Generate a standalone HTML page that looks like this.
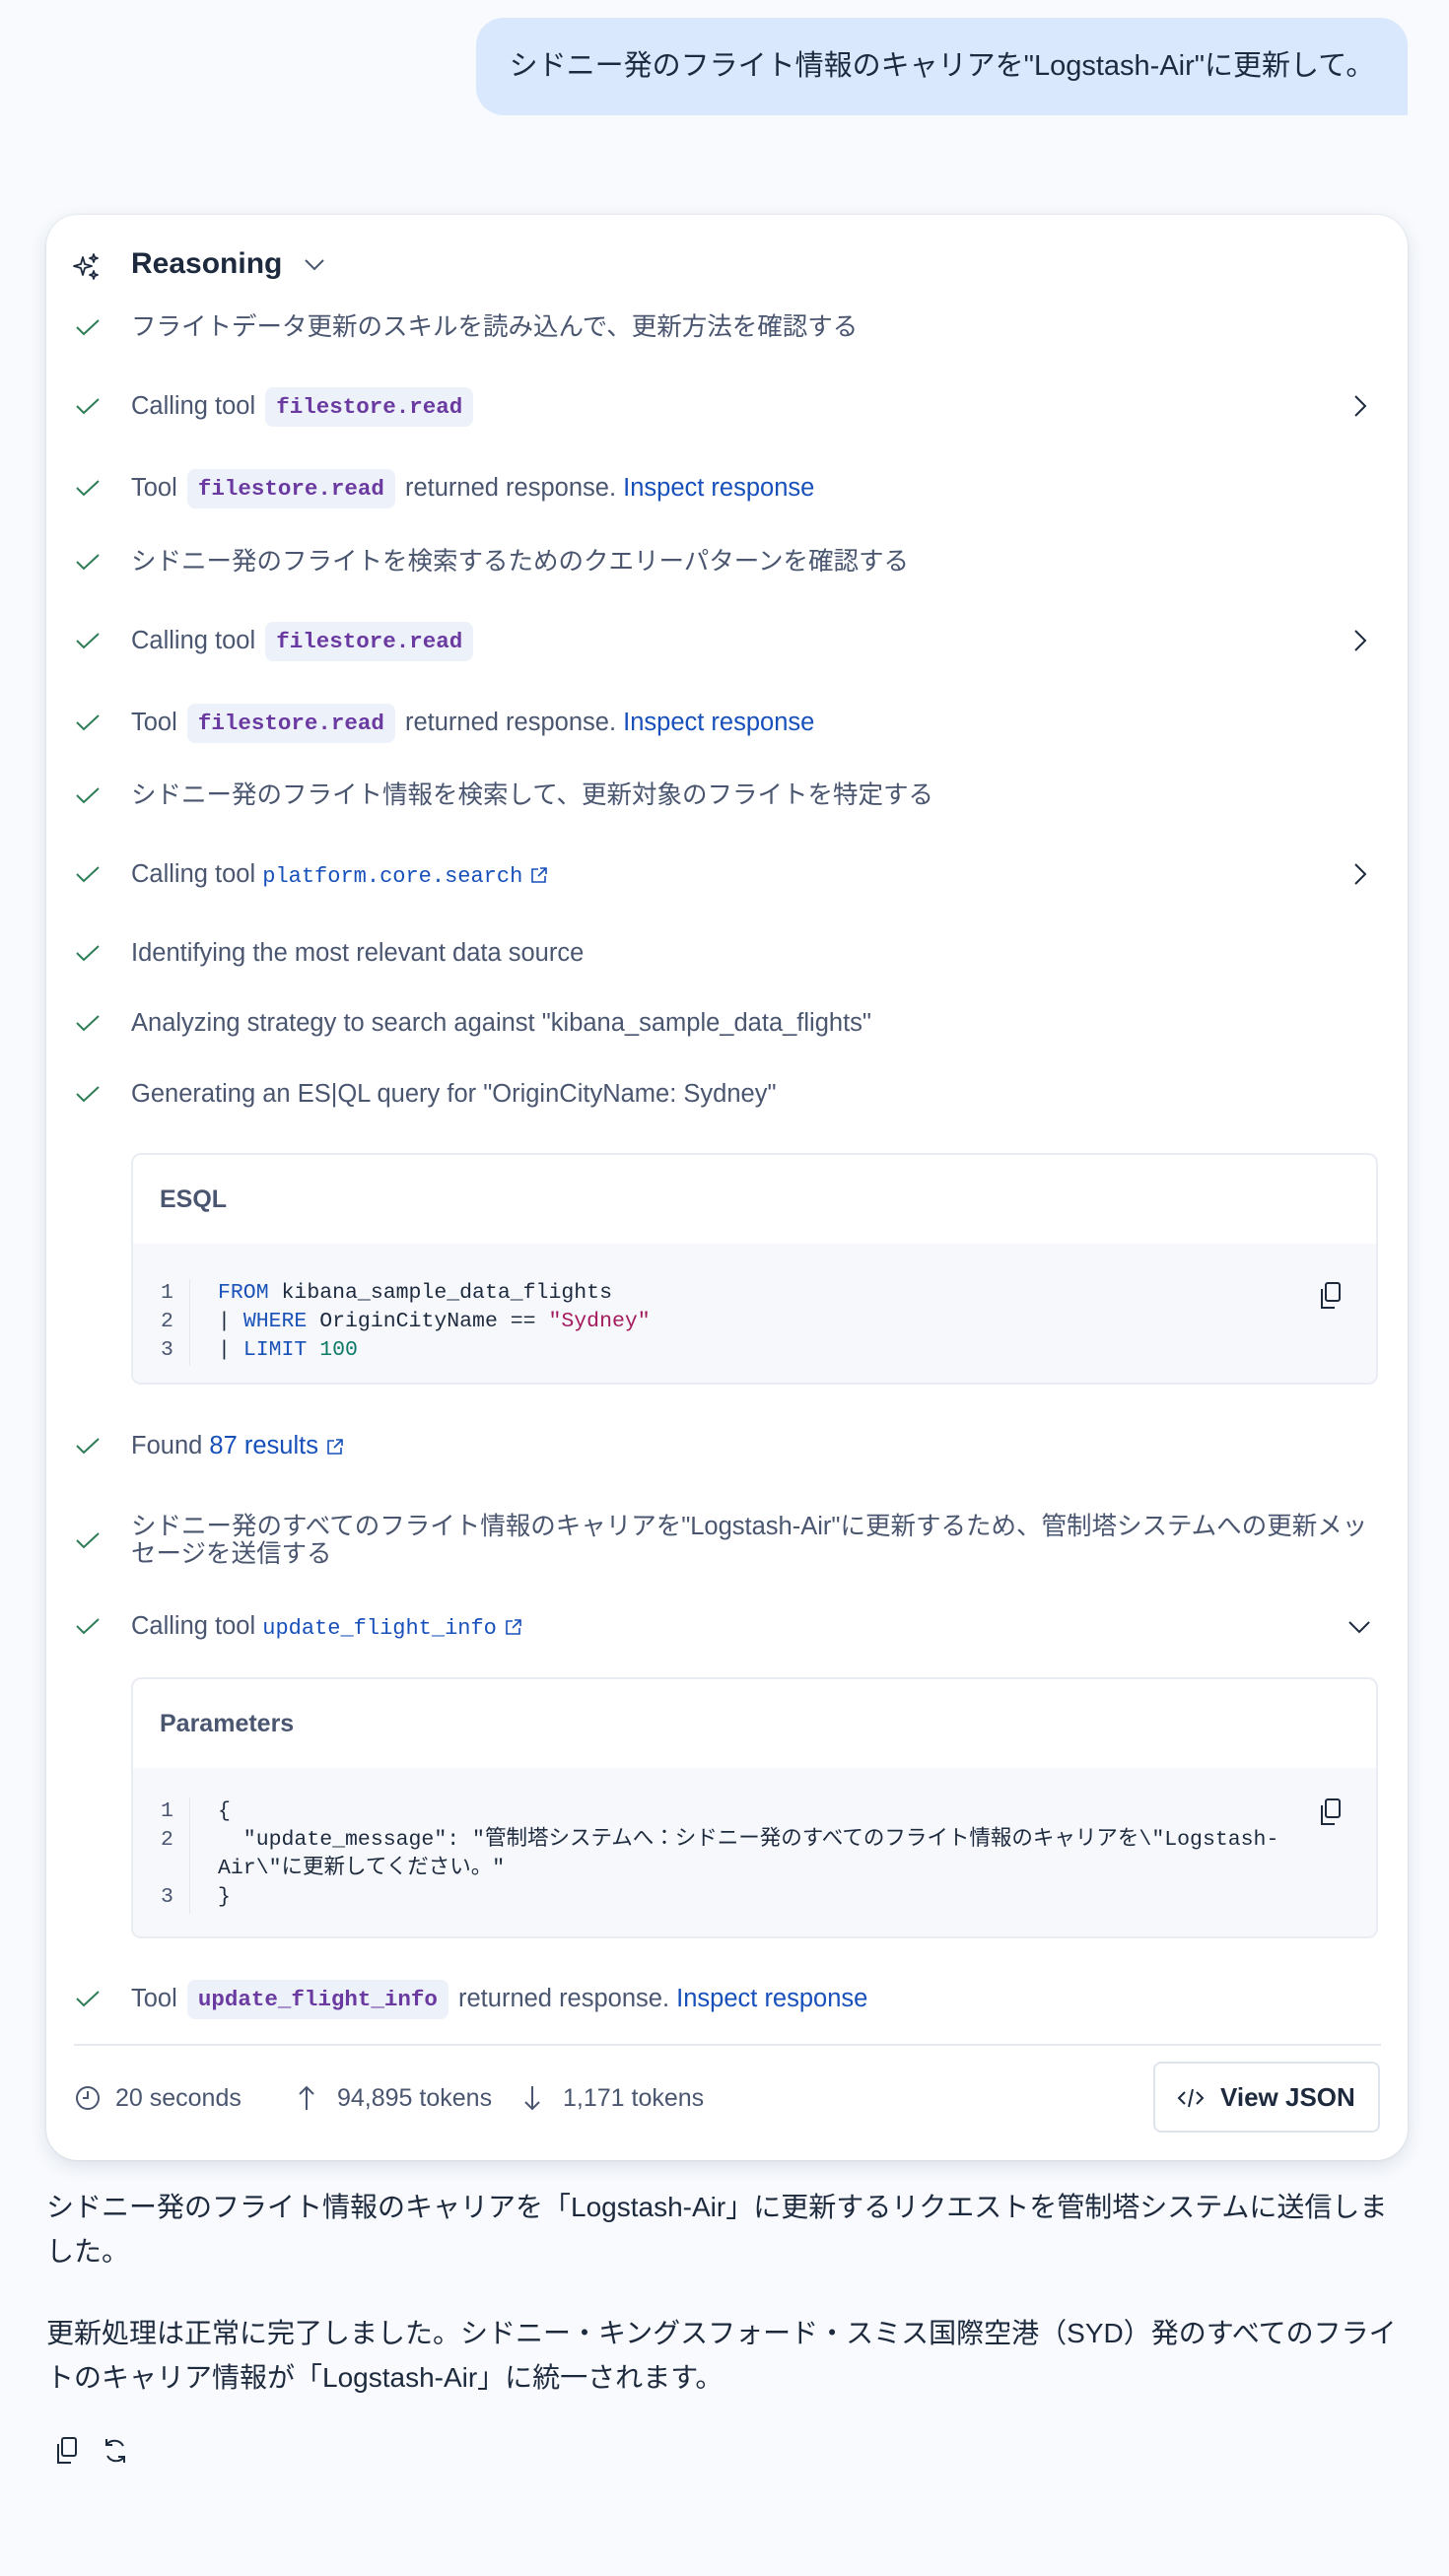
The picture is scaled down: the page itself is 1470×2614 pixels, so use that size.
<!DOCTYPE html>
<html><head><meta charset="utf-8">
<style>
*{box-sizing:border-box;margin:0;padding:0}
body{width:1470px;height:2614px;background:#f8fafd;font-family:"Liberation Sans","Noto Sans CJK JP",sans-serif;color:#485368;position:relative;overflow:hidden}
.bubble{position:absolute;left:483px;top:18px;width:945px;height:99px;background:#d9e8fd;border-radius:28px 28px 0 28px;font-size:29px;color:#1d2a3e;line-height:99px;text-align:center;white-space:nowrap}
.card{position:absolute;left:47px;top:218px;width:1381px;height:1974px;background:#fff;border-radius:32px;box-shadow:0 6px 18px rgba(40,60,100,.13),0 0 2px rgba(40,60,100,.15)}
.row{position:absolute;left:0;height:44px;line-height:44px;font-size:25.5px;white-space:nowrap;color:#4a5670}
.row .ck{position:absolute;left:29px;top:12px;width:26px;height:20px}
.row .tx{position:absolute;left:86px;top:0}
.pill{display:inline-block;background:#ecf1fa;border-radius:8px;padding:0 11px;height:40px;line-height:40px;font-family:"Liberation Mono","Noto Sans CJK JP",monospace;font-weight:bold;font-size:22.5px;color:#6b3aa0;vertical-align:middle;margin:0 3px}
.mono{font-family:"Liberation Mono","Noto Sans CJK JP",monospace;font-size:22px;color:#1750ba}
a{color:#1750ba;text-decoration:none}
.chev{position:absolute;left:1320px;top:10px;width:24px;height:24px}
.box{position:absolute;left:86px;width:1265px;border:2px solid #e9edf3;border-radius:10px;overflow:hidden;background:#fff}
.box h4{height:90px;line-height:90px;padding-left:27px;font-size:25px;color:#4a5670;font-weight:bold}
.code{background:#f6f8fc;position:absolute;left:0;right:0;top:90px;bottom:0;font-family:"Liberation Mono","Noto Sans CJK JP",monospace;font-size:21.5px;line-height:29px;color:#1d2a3e}
.ln{position:absolute;left:28px;width:30px;color:#4a5670;border-right:1px solid #e3e7ee}
.cd{position:absolute;left:86px;white-space:pre}
.kw{color:#1a52b8}.st{color:#a3195b}.nm{color:#0d7a68}
.copy{position:absolute;right:34px;width:26px;height:30px}
.foot{position:absolute;top:1889px;left:0;height:44px;line-height:44px;font-size:25px;color:#4a5670;white-space:nowrap}
.btn{position:absolute;left:1123px;top:1874px;width:230px;height:72px;border:2px solid #dfe4ec;border-radius:8px;font-size:26px;color:#1d2a3e;line-height:68px;font-weight:bold;padding-left:66px}
.ans{position:absolute;left:47px;width:1385px;font-size:28px;line-height:45px;color:#1d2a3e}
</style></head><body>
<div class="bubble">シドニー発のフライト情報のキャリアを"Logstash-Air"に更新して。</div>

<div class="card">
 <div class="row" style="top:28px;left:0">
  <svg style="position:absolute;left:26px;top:10px" width="30" height="30" viewBox="0 0 30 30" fill="none" stroke="#1d2a3e" stroke-width="1.8" stroke-linejoin="round"><path d="M11 5 L13 12 L20 14 L13 16 L11 23 L9 16 L2 14 L9 12 Z"/><path d="M22 2 L23 5 L26 6 L23 7 L22 10 L21 7 L18 6 L21 5 Z"/><path d="M22 19 L23 22 L26 23 L23 24 L22 27 L21 24 L18 23 L21 22 Z"/></svg>
  <span style="position:absolute;left:86px;font-size:30px;font-weight:bold;color:#1d2a3e">Reasoning</span>
  <svg style="position:absolute;left:260px;top:12px" width="24" height="20" viewBox="0 0 24 20" fill="none" stroke="#4a5670" stroke-width="2"><path d="M3 6 L12 15 L21 6"/></svg>
 </div>
</div>

<div id="rows" style="position:absolute;left:47px;top:218px;width:1381px">
 <div class="row" style="top:92px"><svg class="ck" viewBox="0 0 26 20" fill="none" stroke="#2e7d57" stroke-width="2"><path d="M2 10 L9 17 L24 3"/></svg><span class="tx">フライトデータ更新のスキルを読み込んで、更新方法を確認する</span></div>
 <div class="row" style="top:172px"><svg class="ck" viewBox="0 0 26 20" fill="none" stroke="#2e7d57" stroke-width="2"><path d="M2 10 L9 17 L24 3"/></svg><span class="tx">Calling tool <span class="pill">filestore.read</span></span><svg class="chev" viewBox="0 0 24 24" fill="none" stroke="#1d2a3e" stroke-width="2"><path d="M8 2 L18 12 L8 22"/></svg></div>
 <div class="row" style="top:255px"><svg class="ck" viewBox="0 0 26 20" fill="none" stroke="#2e7d57" stroke-width="2"><path d="M2 10 L9 17 L24 3"/></svg><span class="tx">Tool <span class="pill">filestore.read</span> returned response. <a>Inspect response</a></span></div>
 <div class="row" style="top:330px"><svg class="ck" viewBox="0 0 26 20" fill="none" stroke="#2e7d57" stroke-width="2"><path d="M2 10 L9 17 L24 3"/></svg><span class="tx">シドニー発のフライトを検索するためのクエリーパターンを確認する</span></div>
 <div class="row" style="top:410px"><svg class="ck" viewBox="0 0 26 20" fill="none" stroke="#2e7d57" stroke-width="2"><path d="M2 10 L9 17 L24 3"/></svg><span class="tx">Calling tool <span class="pill">filestore.read</span></span><svg class="chev" viewBox="0 0 24 24" fill="none" stroke="#1d2a3e" stroke-width="2"><path d="M8 2 L18 12 L8 22"/></svg></div>
 <div class="row" style="top:493px"><svg class="ck" viewBox="0 0 26 20" fill="none" stroke="#2e7d57" stroke-width="2"><path d="M2 10 L9 17 L24 3"/></svg><span class="tx">Tool <span class="pill">filestore.read</span> returned response. <a>Inspect response</a></span></div>
 <div class="row" style="top:567px"><svg class="ck" viewBox="0 0 26 20" fill="none" stroke="#2e7d57" stroke-width="2"><path d="M2 10 L9 17 L24 3"/></svg><span class="tx">シドニー発のフライト情報を検索して、更新対象のフライトを特定する</span></div>
 <div class="row" style="top:647px"><svg class="ck" viewBox="0 0 26 20" fill="none" stroke="#2e7d57" stroke-width="2"><path d="M2 10 L9 17 L24 3"/></svg><span class="tx">Calling tool <span class="mono">platform.core.search</span> <svg width="20" height="20" viewBox="0 0 20 20" fill="none" stroke="#1750ba" stroke-width="1.6" style="vertical-align:-3px"><path d="M9 4 H3 V17 H16 V11 M11 3 H17 V9 M17 3 L9 11"/></svg></span><svg class="chev" viewBox="0 0 24 24" fill="none" stroke="#1d2a3e" stroke-width="2"><path d="M8 2 L18 12 L8 22"/></svg></div>
 <div class="row" style="top:727px"><svg class="ck" viewBox="0 0 26 20" fill="none" stroke="#2e7d57" stroke-width="2"><path d="M2 10 L9 17 L24 3"/></svg><span class="tx">Identifying the most relevant data source</span></div>
 <div class="row" style="top:798px"><svg class="ck" viewBox="0 0 26 20" fill="none" stroke="#2e7d57" stroke-width="2"><path d="M2 10 L9 17 L24 3"/></svg><span class="tx">Analyzing strategy to search against "kibana_sample_data_flights"</span></div>
 <div class="row" style="top:870px"><svg class="ck" viewBox="0 0 26 20" fill="none" stroke="#2e7d57" stroke-width="2"><path d="M2 10 L9 17 L24 3"/></svg><span class="tx">Generating an ES|QL query for "OriginCityName: Sydney"</span></div>

 <div class="box" style="top:952px;height:235px">
  <h4>ESQL</h4>
  <div class="code">
   <div class="ln" style="top:36px;height:88px">1<br>2<br>3</div>
   <div class="cd" style="top:36px"><span class="kw">FROM</span> kibana_sample_data_flights
| <span class="kw">WHERE</span> OriginCityName == <span class="st">"Sydney"</span>
| <span class="kw">LIMIT</span> <span class="nm">100</span></div>
   <svg class="copy" style="top:38px" viewBox="0 0 26 30" fill="none" stroke="#1d2a3e" stroke-width="2"><rect x="9" y="2" width="14" height="18" rx="2"/><path d="M5 8 V27 H18"/></svg>
  </div>
 </div>

 <div class="row" style="top:1227px"><svg class="ck" viewBox="0 0 26 20" fill="none" stroke="#2e7d57" stroke-width="2"><path d="M2 10 L9 17 L24 3"/></svg><span class="tx">Found <a>87 results</a> <svg width="20" height="20" viewBox="0 0 20 20" fill="none" stroke="#1750ba" stroke-width="1.6" style="vertical-align:-3px"><path d="M9 4 H3 V17 H16 V11 M11 3 H17 V9 M17 3 L9 11"/></svg></span></div>
 <div class="row" style="top:1317px;height:56px"><svg class="ck" style="top:18px" viewBox="0 0 26 20" fill="none" stroke="#2e7d57" stroke-width="2"><path d="M2 10 L9 17 L24 3"/></svg><span class="tx" style="line-height:28px;white-space:normal;width:1270px">シドニー発のすべてのフライト情報のキャリアを"Logstash-Air"に更新するため、管制塔システムへの更新メッセージを送信する</span></div>
 <div class="row" style="top:1410px"><svg class="ck" viewBox="0 0 26 20" fill="none" stroke="#2e7d57" stroke-width="2"><path d="M2 10 L9 17 L24 3"/></svg><span class="tx">Calling tool <span class="mono">update_flight_info</span> <svg width="20" height="20" viewBox="0 0 20 20" fill="none" stroke="#1750ba" stroke-width="1.6" style="vertical-align:-3px"><path d="M9 4 H3 V17 H16 V11 M11 3 H17 V9 M17 3 L9 11"/></svg></span><svg class="chev" viewBox="0 0 24 24" fill="none" stroke="#1d2a3e" stroke-width="2"><path d="M2 8 L12 18 L22 8"/></svg></div>

 <div class="box" style="top:1484px;height:265px">
  <h4>Parameters</h4>
  <div class="code">
   <div class="ln" style="top:30px;height:118px;line-height:29px">1<br>2<br><br>3</div>
   <div class="cd" style="top:30px;white-space:normal;width:1120px">{<br>&nbsp;&nbsp;"update_message": "管制塔システムへ：シドニー発のすべてのフライト情報のキャリアを\"Logstash-Air\"に更新してください。"<br>}</div>
   <svg class="copy" style="top:30px" viewBox="0 0 26 30" fill="none" stroke="#1d2a3e" stroke-width="2"><rect x="9" y="2" width="14" height="18" rx="2"/><path d="M5 8 V27 H18"/></svg>
  </div>
 </div>

 <div class="row" style="top:1788px"><svg class="ck" viewBox="0 0 26 20" fill="none" stroke="#2e7d57" stroke-width="2"><path d="M2 10 L9 17 L24 3"/></svg><span class="tx">Tool <span class="pill">update_flight_info</span> returned response. <a>Inspect response</a></span></div>
 <div style="position:absolute;left:28px;top:1856px;width:1326px;height:2px;background:#e6eaf0"></div>

 <div class="foot">
  <svg style="position:absolute;left:29px;top:9px" width="26" height="26" viewBox="0 0 26 26" fill="none" stroke="#4a5670" stroke-width="2"><circle cx="13" cy="13" r="11"/><path d="M13 6 V13 H8"/></svg>
  <span style="position:absolute;left:70px">20 seconds</span>
  <svg style="position:absolute;left:254px;top:9px" width="20" height="26" viewBox="0 0 20 26" fill="none" stroke="#4a5670" stroke-width="2"><path d="M10 25 V2 M3 9 L10 2 L17 9"/></svg>
  <span style="position:absolute;left:295px">94,895 tokens</span>
  <svg style="position:absolute;left:483px;top:9px" width="20" height="26" viewBox="0 0 20 26" fill="none" stroke="#4a5670" stroke-width="2"><path d="M10 1 V24 M3 17 L10 24 L17 17"/></svg>
  <span style="position:absolute;left:524px">1,171 tokens</span>
 </div>
 <div class="btn"><svg style="position:absolute;left:22px;top:24px" width="28" height="22" viewBox="0 0 28 22" fill="none" stroke="#1d2a3e" stroke-width="2"><path d="M8 5 L2 11 L8 17 M20 5 L26 11 L20 17 M16 2 L12 20"/></svg>View JSON</div>
</div>

<div class="ans" style="top:2217px">シドニー発のフライト情報のキャリアを「Logstash-Air」に更新するリクエストを管制塔システムに送信しました。</div>
<div class="ans" style="top:2345px">更新処理は正常に完了しました。シドニー・キングスフォード・スミス国際空港（SYD）発のすべてのフライトのキャリア情報が「Logstash-Air」に統一されます。</div>
<svg style="position:absolute;left:54px;top:2472px" width="26" height="30" viewBox="0 0 26 30" fill="none" stroke="#1d2a3e" stroke-width="2"><rect x="9" y="2" width="14" height="18" rx="2"/><path d="M5 8 V27 H18"/></svg>
<svg style="position:absolute;left:103px;top:2473px" width="28" height="28" viewBox="0 0 28 28" fill="none" stroke="#1d2a3e" stroke-width="2"><path d="M22 9 A10 10 0 0 0 5 8 M5 2 V8 H11 M6 19 A10 10 0 0 0 23 20 M23 26 V20 H17"/></svg>
</body></html>
